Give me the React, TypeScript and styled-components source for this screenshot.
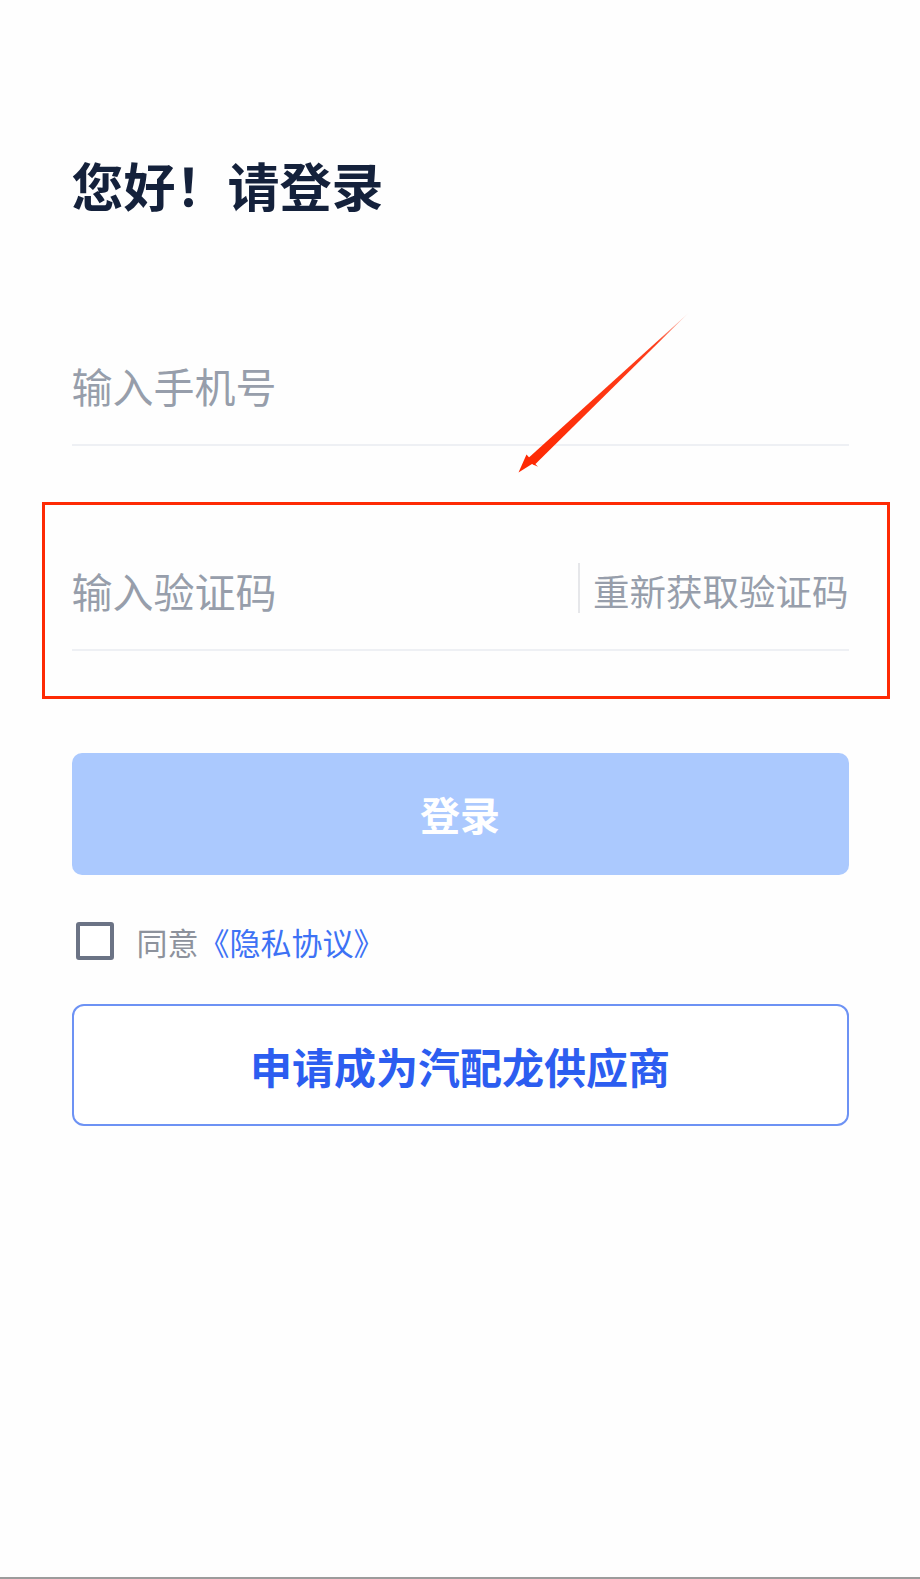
import React from "react";
import styled, { createGlobalStyle } from "styled-components";

const GlobalStyle = createGlobalStyle`
  html, body {
    margin: 0;
    padding: 0;
    background: #ffffff;
  }
  body {
    font-family: "Noto Sans CJK SC", "Noto Sans", sans-serif;
  }
  * { box-sizing: border-box; }
`;

const Page = styled.div`
  position: relative;
  width: 920px;
  height: 1579px;
  padding: 159px 71.5px 0;
  background: #fefefe;
  border-bottom: 2px solid #9c9c9c;
  overflow: hidden;
`;

const Title = styled.h1`
  margin: 0;
  font-size: 52px;
  line-height: 52px;
  font-weight: 700;
  color: #14213b;
  letter-spacing: 0;
`;

const Form = styled.form`
  display: flex;
  flex-direction: column;
  margin-top: 115px;
`;

const Field = styled.div<{ $gap?: number }>`
  display: flex;
  align-items: center;
  height: 120px;
  margin-top: ${(p) => p.$gap ?? 0}px;
  border-bottom: 2px solid #eef0f4;
`;

const Input = styled.input`
  flex: 1;
  min-width: 0;
  height: 100%;
  border: none;
  outline: none;
  padding: 0;
  background: transparent;
  font-family: inherit;
  font-size: 41px;
  color: #14213b;
  &::placeholder {
    color: #979eab;
  }
`;

const Divider = styled.span`
  width: 2px;
  height: 50px;
  margin-top: -4px;
  margin-right: 13px;
  background: #e6e7ea;
`;

const CodeLink = styled.span`
  font-size: 36.5px;
  line-height: 37px;
  color: #979eab;
  white-space: nowrap;
`;

const PrimaryButton = styled.button`
  margin-top: 102px;
  height: 122px;
  border: none;
  border-radius: 10px;
  background: #abc9fe;
  color: #ffffff;
  font-family: inherit;
  font-size: 40px;
  font-weight: 700;
  cursor: pointer;
`;

const AgreeRow = styled.label`
  display: flex;
  align-items: center;
  height: 38px;
  margin-top: 47px;
  padding-left: 4px;
  font-size: 31px;
  line-height: 31px;
  color: #8d929c;
`;

const Checkbox = styled.input.attrs({ type: "checkbox" })`
  appearance: none;
  width: 38px;
  height: 38px;
  margin: 0 23px 0 0;
  border: 4px solid #6b7385;
  border-radius: 3px;
  background: #ffffff;
`;

const Link = styled.span`
  color: #3d72f5;
`;

const OutlineButton = styled.button`
  margin-top: 44px;
  height: 122px;
  border: 2px solid #6d92f4;
  border-radius: 12px;
  background: #ffffff;
  color: #2c5df0;
  font-family: inherit;
  font-size: 42px;
  font-weight: 700;
  cursor: pointer;
`;

const Highlight = styled.div`
  position: absolute;
  left: 42px;
  top: 502px;
  width: 848px;
  height: 197px;
  border: 3px solid #fe2a04;
  pointer-events: none;
`;

const ArrowSvg = styled.svg`
  position: absolute;
  left: 500px;
  top: 300px;
  width: 200px;
  height: 180px;
  pointer-events: none;
`;

function Arrow() {
  // coordinates relative to (500, 300)
  return (
    <ArrowSvg viewBox="0 0 200 180">
      <defs>
        <linearGradient id="shaft" x1="189" y1="12.5" x2="31" y2="162" gradientUnits="userSpaceOnUse">
          <stop offset="0" stopColor="#fe2a04" stopOpacity="0.1" />
          <stop offset="0.2" stopColor="#fe2a04" stopOpacity="0.9" />
          <stop offset="1" stopColor="#fe2a04" stopOpacity="1" />
        </linearGradient>
      </defs>
      <polygon points="189,12.5 34.2,165.2 27.8,158.6" fill="url(#shaft)" />
      <polygon points="18.5,172.5 26.5,154.5 31,159.5 38,166.8 32,164" fill="#fe2a04" />
    </ArrowSvg>
  );
}

export default function App() {
  return (
    <>
      <GlobalStyle />
      <Page>
        <Title>您好！请登录</Title>
        <Form onSubmit={(e) => e.preventDefault()}>
          <Field>
            <Input placeholder="输入手机号" />
          </Field>
          <Field $gap={85}>
            <Input placeholder="输入验证码" />
            <Divider />
            <CodeLink>重新获取验证码</CodeLink>
          </Field>
          <PrimaryButton type="submit">登录</PrimaryButton>
          <AgreeRow>
            <Checkbox />
            同意<Link>《隐私协议》</Link>
          </AgreeRow>
          <OutlineButton type="button">申请成为汽配龙供应商</OutlineButton>
        </Form>
        <Highlight />
        <Arrow />
      </Page>
    </>
  );
}
